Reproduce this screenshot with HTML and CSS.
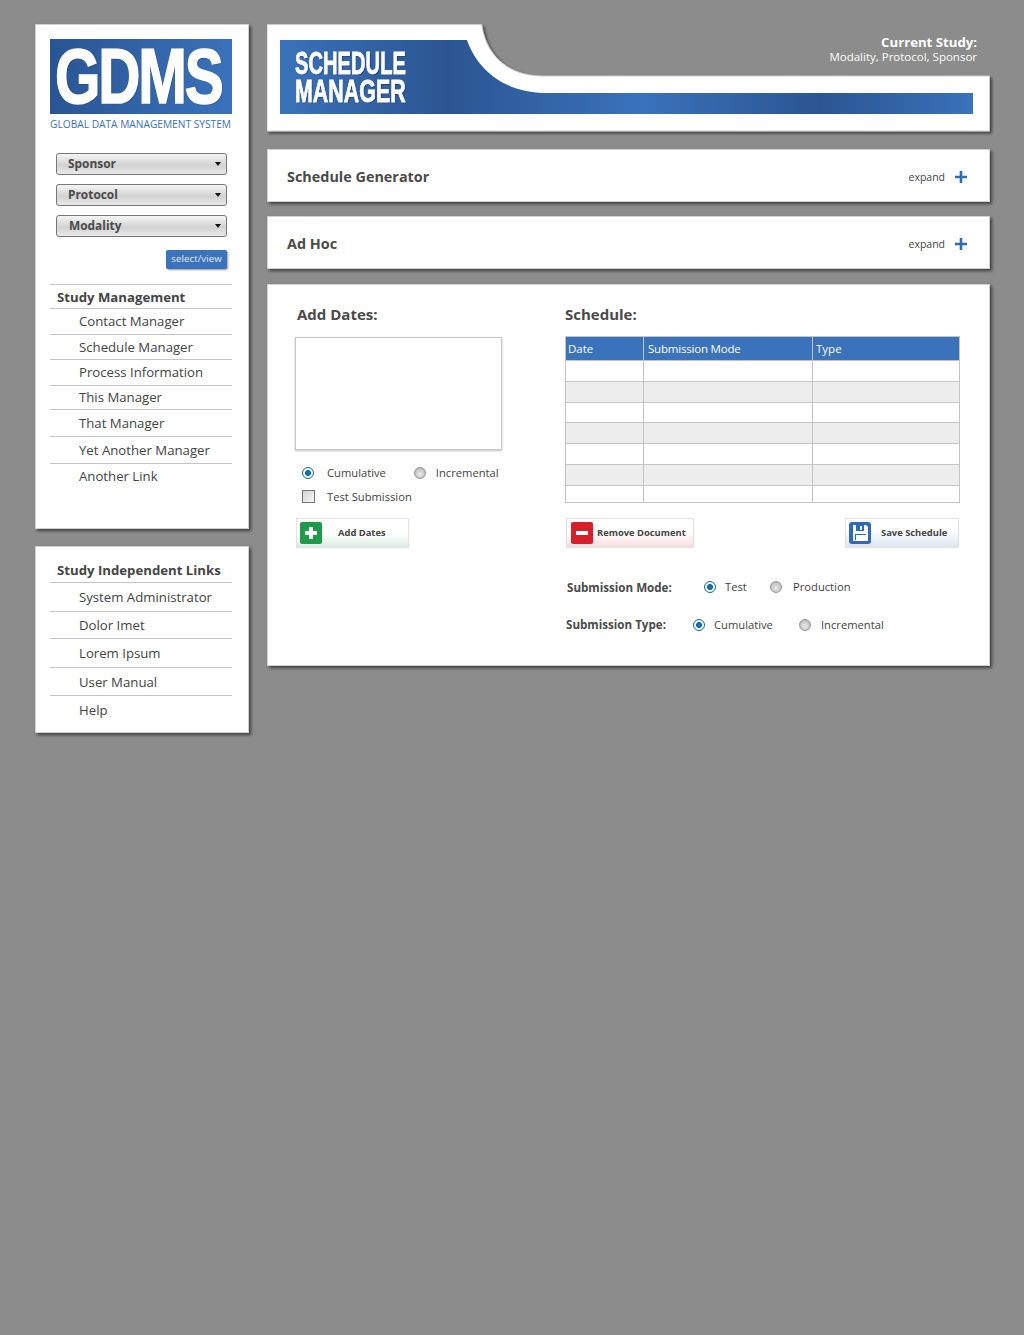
FILE: index.html
```html
<!DOCTYPE html>
<html lang="en">
<head>
  <meta charset="UTF-8">
  <meta name="viewport" content="width=device-width, initial-scale=1.0">
  <title>GDMS - Schedule Manager</title>
  <link rel="stylesheet" href="styles.css">
</head>
<body>
  <div class="page">
    <div class="sidebar">
      <div class="card card-main">
        <div class="logo"><span class="logo-text">GDMS</span></div>
        <div class="logo-sub">GLOBAL DATA MANAGEMENT SYSTEM</div>
        <div class="picker picker-1"><span>Sponsor</span><i class="caret"></i></div>
        <div class="picker picker-2"><span>Protocol</span><i class="caret"></i></div>
        <div class="picker picker-3"><span>Modality</span><i class="caret"></i></div>
        <div class="select-row"><a class="select-btn">select/view</a></div>
        <ul class="nav nav-study">
          <li class="nav-title">Study Management</li>
          <li>Contact Manager</li>
          <li>Schedule Manager</li>
          <li>Process Information</li>
          <li>This Manager</li>
          <li>That Manager</li>
          <li>Yet Another Manager</li>
          <li>Another Link</li>
        </ul>
      </div>
      <div class="card card-links">
        <ul class="nav nav-links">
          <li class="nav-title">Study Independent Links</li>
          <li>System Administrator</li>
          <li>Dolor Imet</li>
          <li>Lorem Ipsum</li>
          <li>User Manual</li>
          <li>Help</li>
        </ul>
      </div>
    </div>

    <div class="content">
      <div class="banner">
        <svg class="banner-bg" width="727" height="112" viewBox="0 0 727 112">
          <defs>
            <linearGradient id="bannerBlue" x1="13" y1="0" x2="706" y2="0" gradientUnits="userSpaceOnUse">
              <stop offset="0" stop-color="#3a72b9"/>
              <stop offset="0.24" stop-color="#2b5592"/>
              <stop offset="0.52" stop-color="#3a72bb"/>
              <stop offset="0.78" stop-color="#2b5592"/>
              <stop offset="1" stop-color="#3a72bb"/>
            </linearGradient>
            <filter id="bannerShadow" x="-2%" y="-5%" width="104%" height="115%">
              <feDropShadow dx="2" dy="2" stdDeviation="1.5" flood-color="#000" flood-opacity="0.55"/>
            </filter>
          </defs>
          <path d="M0 0.5H214.7C218 26 236 52 276 52H722.5V107H0Z" fill="#fff" stroke="#ccc" filter="url(#bannerShadow)"/>
          <path d="M13 16H200C208 40 232 69 280 69H706V90H13Z" fill="url(#bannerBlue)"/>
        </svg>
        <div class="banner-title"><span>SCHEDULE</span><span class="title-wide">MANAGER</span></div>
        <div class="banner-study">
          <strong>Current Study:</strong>
          <span>Modality, Protocol, Sponsor</span>
        </div>
      </div>

      <div class="card bar">
        <h2>Schedule Generator</h2>
        <span class="expand">expand</span>
        <svg class="plus" width="12" height="12" viewBox="0 0 12 12"><path d="M4.7 0h2.6v4.7H12v2.6H7.3V12H4.7V7.3H0V4.7h4.7z" fill="#2f6bb9"/></svg>
      </div>
      <div class="card bar">
        <h2>Ad Hoc</h2>
        <span class="expand">expand</span>
        <svg class="plus" width="12" height="12" viewBox="0 0 12 12"><path d="M4.7 0h2.6v4.7H12v2.6H7.3V12H4.7V7.3H0V4.7h4.7z" fill="#2f6bb9"/></svg>
      </div>

      <div class="card panel">
        <div class="col-dates">
          <h3 class="dates-title">Add Dates:</h3>
          <div class="date-box"></div>
          <div class="opt-row">
            <input type="radio" class="radio" name="addmode" checked>
            <label class="lbl-cumulative">Cumulative</label>
            <input type="radio" class="radio radio-inc" name="addmode">
            <label>Incremental</label>
          </div>
          <div class="opt-row opt-check">
            <i class="check"></i>
            <label>Test Submission</label>
          </div>
          <a class="action action-green">
            <svg class="action-icon" width="22" height="22" viewBox="0 0 22 22"><rect width="22" height="22" rx="2" fill="#1f9a4b"/><path d="M9 5h4v4h4v4h-4v4H9v-4H5V9h4z" fill="#fff"/></svg>
            <span class="add-label">Add Dates</span>
          </a>
        </div>

        <div class="col-schedule">
          <h3>Schedule:</h3>
          <table class="grid">
            <thead>
              <tr><th>Date</th><th>Submission Mode</th><th>Type</th></tr>
            </thead>
            <tbody>
              <tr class="h21"><td></td><td></td><td></td></tr>
              <tr class="h21 alt"><td></td><td></td><td></td></tr>
              <tr class="h20"><td></td><td></td><td></td></tr>
              <tr class="h21 alt"><td></td><td></td><td></td></tr>
              <tr class="h21"><td></td><td></td><td></td></tr>
              <tr class="h21 alt"><td></td><td></td><td></td></tr>
              <tr class="h17"><td></td><td></td><td></td></tr>
            </tbody>
          </table>
          <div class="actions">
            <a class="action action-red">
              <svg class="action-icon" width="22" height="22" viewBox="0 0 22 22"><rect width="22" height="22" rx="2" fill="#d8202c"/><rect x="5" y="9" width="12" height="4" fill="#fff"/></svg>
              <span>Remove Document</span>
            </a>
            <a class="action action-blue">
              <svg class="action-icon" width="22" height="22" viewBox="0 0 22 22"><rect width="22" height="22" rx="3" fill="#2f6bb9"/><path d="M4 3h13l2 2v14H4z" fill="#fff"/><rect x="7" y="3" width="8" height="6" fill="#2f6bb9"/><rect x="11" y="4" width="2" height="4" fill="#fff"/><path d="M6 12h11v1H7v5H6z" fill="#2f6bb9"/></svg>
              <span class="save-label">Save Schedule</span>
            </a>
          </div>
          <div class="sub-row sub-mode">
            <strong>Submission Mode:</strong>
            <input type="radio" class="radio" name="submode" checked>
            <label>Test</label>
            <input type="radio" class="radio radio-far" name="submode">
            <label>Production</label>
          </div>
          <div class="sub-row sub-type">
            <strong>Submission Type:</strong>
            <input type="radio" class="radio" name="subtype" checked>
            <label>Cumulative</label>
            <input type="radio" class="radio radio-far" name="subtype">
            <label>Incremental</label>
          </div>
        </div>
      </div>
    </div>
  </div>
</body>
</html>
```

FILE: styles.css
```css
* {
  box-sizing: border-box;
}
body {
  margin: 0;
  min-height: 1335px;
  background-color: #8c8c8c;
  font-family: "Open Sans", "Noto Sans", sans-serif;
  color: #444;
}
.page {
  display: flex;
  align-items: flex-start;
  padding: 24px 0 0 35px;
}
.sidebar {
  width: 214px;
  margin-right: 18px;
}
.content {
  width: 723px;
}
.card {
  background-color: #fff;
  border: 1px solid #d0d0d0;
  box-shadow: 2px 2px 3px rgba(0, 0, 0, 0.55);
}

/* left column */
.card-main {
  height: 505px;
  padding: 14px 17px 0 14px;
  margin-bottom: 17px;
}
.card-links {
  height: 187px;
  padding: 11px 17px 0 14px;
}
.logo {
  width: 182px;
  height: 75px;
  background: linear-gradient(90deg, #2a5594, #3a72bb);
}
.logo-text {
  display: block;
  font-family: "Liberation Sans", Arial, sans-serif;
  font-weight: bold;
  font-size: 78px;
  line-height: 75px;
  color: #fff;
  -webkit-text-stroke: 1.5px #fff;
  letter-spacing: -3px;
  text-shadow: 1px 1px 1px rgba(0, 0, 0, 0.4);
  transform: scaleX(0.75);
  transform-origin: 5px 0;
  padding-left: 5px;
  white-space: nowrap;
}
.logo-sub {
  margin-top: 3px;
  width: 182px;
  font-size: 10.2px;
  line-height: 14px;
  color: #3a72bb;
  white-space: nowrap;
}
.picker {
  position: relative;
  width: 171px;
  height: 22px;
  margin-left: 6px;
  border: 1px solid #777;
  border-radius: 3px;
  background: linear-gradient(#f6f6f6, #d2d2d2 55%, #e8e8e8);
  font-size: 11.9px;
  font-weight: bold;
  line-height: 18px;
  color: #4a4a4a;
  padding-left: 11px;
}
.picker-1 {
  margin-top: 22px;
}
.picker-2 {
  margin-top: 9px;
}
.picker-3 {
  margin-top: 9px;
  padding-left: 12px;
}
.caret {
  position: absolute;
  right: 5px;
  top: 8px;
  border-left: 3.5px solid transparent;
  border-right: 3.5px solid transparent;
  border-top: 4px solid #111;
}
.select-row {
  display: flex;
  justify-content: flex-end;
  width: 177px;
  margin-top: 13px;
}
.select-btn {
  width: 61px;
  height: 19px;
  border-radius: 2px;
  background-color: #3a72bd;
  box-shadow: 1px 1px 2px rgba(0, 0, 0, 0.4);
  color: #e8eef8;
  font-size: 9.6px;
  letter-spacing: 0.1px;
  line-height: 17px;
  text-align: center;
}
.nav {
  list-style: none;
  margin: 0;
  padding: 0;
  width: 182px;
  display: grid;
  font-size: 13.2px;
}
.nav-study {
  margin-top: 15px;
  border-top: 1px solid #c4c4c4;
  grid-template-rows: 24px 26px 25px 26px 24px 27px 27px 26px;
}
.nav-study li {
  padding-bottom: 1px;
}
.nav-study li:last-child {
  padding-bottom: 3px;
}
.nav-links {
  grid-template-rows: 25px 29px 27px 29px 28px 28px;
}
.nav li {
  padding-left: 29px;
  border-bottom: 1px solid #c4c4c4;
  display: flex;
  align-items: center;
  white-space: nowrap;
}
.nav li:last-child {
  border-bottom: none;
}
.nav .nav-title {
  padding-left: 7px;
  padding-bottom: 0;
  font-weight: bold;
  color: #444;
  font-size: 13.2px;
}

/* banner */
.banner {
  position: relative;
  display: flex;
  justify-content: space-between;
  height: 107px;
  margin-bottom: 18px;
}
.banner-bg {
  position: absolute;
  left: 0;
  top: 0;
}
.banner-title {
  position: relative;
  padding: 25px 0 0 28px;
  font-family: "Liberation Sans", Arial, sans-serif;
  font-weight: bold;
  font-size: 32px;
  line-height: 28px;
  color: #fff;
  -webkit-text-stroke: 0.8px #fff;
  text-shadow: 1px 1px 1px rgba(0, 0, 0, 0.5);
}
.banner-title span {
  display: block;
  transform: scaleX(0.63);
  transform-origin: 0 0;
  white-space: nowrap;
}
.banner-title .title-wide {
  transform: scaleX(0.67);
}
.banner-study {
  position: relative;
  padding: 10px 13px 0 0;
  text-align: right;
  color: #fff;
}
.banner-study strong {
  display: block;
  font-size: 13.2px;
  line-height: 16px;
}
.banner-study span {
  display: block;
  font-size: 11.5px;
  line-height: 14px;
}

/* collapsed bars */
.bar {
  display: flex;
  align-items: center;
  height: 53px;
  margin-bottom: 14px;
  padding: 2px 22px 0 19px;
}
.bar h2 {
  flex: 1;
  margin: 0;
  font-size: 14.4px;
  font-weight: bold;
  color: #4a4a4a;
}
.expand {
  font-size: 10.5px;
  color: #444;
  margin-right: 10px;
}

/* main panel */
.panel {
  display: flex;
  height: 382px;
  margin-top: 15px;
  padding: 0 29px 0 27px;
}
.panel h3 {
  margin: 0;
  font-size: 15px;
  font-weight: bold;
  line-height: 22px;
  color: #4a4a4a;
}
.col-dates {
  width: 270px;
  padding-top: 18px;
}
.dates-title {
  padding-left: 2px;
}
.date-box {
  width: 207px;
  height: 113px;
  margin-top: 12px;
  border: 1px solid #c8c8c8;
  box-shadow: 0 1px 2px rgba(0, 0, 0, 0.25);
}
.opt-row {
  display: flex;
  align-items: center;
  height: 20px;
  margin-top: 12px;
  font-size: 11.2px;
  padding-left: 7px;
}
.opt-row .radio {
  margin-top: 2px;
}
.opt-check {
  margin-top: 4px;
}
.radio {
  appearance: none;
  flex: none;
  width: 12px;
  height: 12px;
  margin: 0 13px 0 0;
  border-radius: 50%;
  border: 1px solid #999;
  background: radial-gradient(circle at 50% 60%, #ececec, #ababab);
}
.radio:checked {
  border-color: #1d6a96;
  background: radial-gradient(circle, #0d86d8 0, #0a5fa8 2.6px, #fff 3.3px, #dfeaf2 6px);
}
.lbl-cumulative {
  margin-right: 28px;
}
.opt-row .radio-inc {
  margin-right: 10px;
}
.check {
  flex: none;
  width: 13px;
  height: 13px;
  margin-right: 12px;
  border: 1px solid #777;
  background: linear-gradient(135deg, #d0d0d0, #f8f8f8);
}
.action {
  display: flex;
  align-items: center;
  height: 29px;
  border: 1px solid #e2e2e2;
  box-shadow: 0 1px 1px rgba(0, 0, 0, 0.1);
  font-size: 9.4px;
  font-weight: bold;
  color: #444;
  padding-left: 4px;
}
.action-icon {
  flex: none;
  margin-right: 4px;
}
.action-green {
  width: 113px;
  margin: 12px 0 0 1px;
  padding-left: 3px;
  background: linear-gradient(#fff 55%, #dcefe2);
}
.add-label {
  margin-left: 12px;
}
.action-red {
  width: 128px;
  background: linear-gradient(#fff 50%, #fbdfe0);
}
.action-blue {
  width: 114px;
  padding-left: 3px;
  background: linear-gradient(#fff 40%, #dde7f4);
}
.save-label {
  margin-left: 6px;
}
.col-schedule {
  width: 395px;
  padding-top: 18px;
}
.grid {
  width: 395px;
  margin-top: 11px;
  border-collapse: collapse;
  table-layout: fixed;
  border: 1px solid #c4c4c4;
}
.grid th {
  height: 24px;
  padding: 0 0 0 3px;
  background-color: #3a72bb;
  border: 1px solid #c4c4c4;
  color: #fff;
  font-size: 11.5px;
  font-weight: normal;
  text-align: left;
}
.grid th:nth-child(1) {
  width: 78px;
  padding-left: 2px;
}
.grid th:nth-child(2) {
  width: 169px;
  padding-left: 4px;
  letter-spacing: -0.2px;
}
.grid td {
  padding: 0;
  border: 1px solid #c4c4c4;
}
.grid .alt td {
  background-color: #ededed;
}
.h21 {
  height: 21px;
}
.h20 {
  height: 20px;
}
.h17 {
  height: 17px;
}
.actions {
  display: flex;
  justify-content: space-between;
  width: 393px;
  margin: 15px 0 0 1px;
}
.sub-row {
  display: flex;
  align-items: center;
  font-size: 11.2px;
  height: 20px;
}
.sub-row strong {
  font-size: 11.6px;
  color: #4a4a4a;
}
.sub-mode {
  margin: 29px 0 0 2px;
}
.sub-mode strong {
  width: 137px;
  padding-top: 2px;
}
.sub-mode .radio {
  margin-right: 9px;
  margin-top: 2px;
}
.sub-mode label {
  width: 45px;
}
.sub-mode .radio-far {
  margin-right: 11px;
}
.sub-type {
  margin: 18px 0 0 1px;
}
.sub-type strong {
  width: 127px;
}
.sub-type .radio {
  margin-right: 9px;
  margin-top: 2px;
}
.sub-type label {
  width: 85px;
}
.sub-type .radio-far {
  margin-right: 10px;
}
```
